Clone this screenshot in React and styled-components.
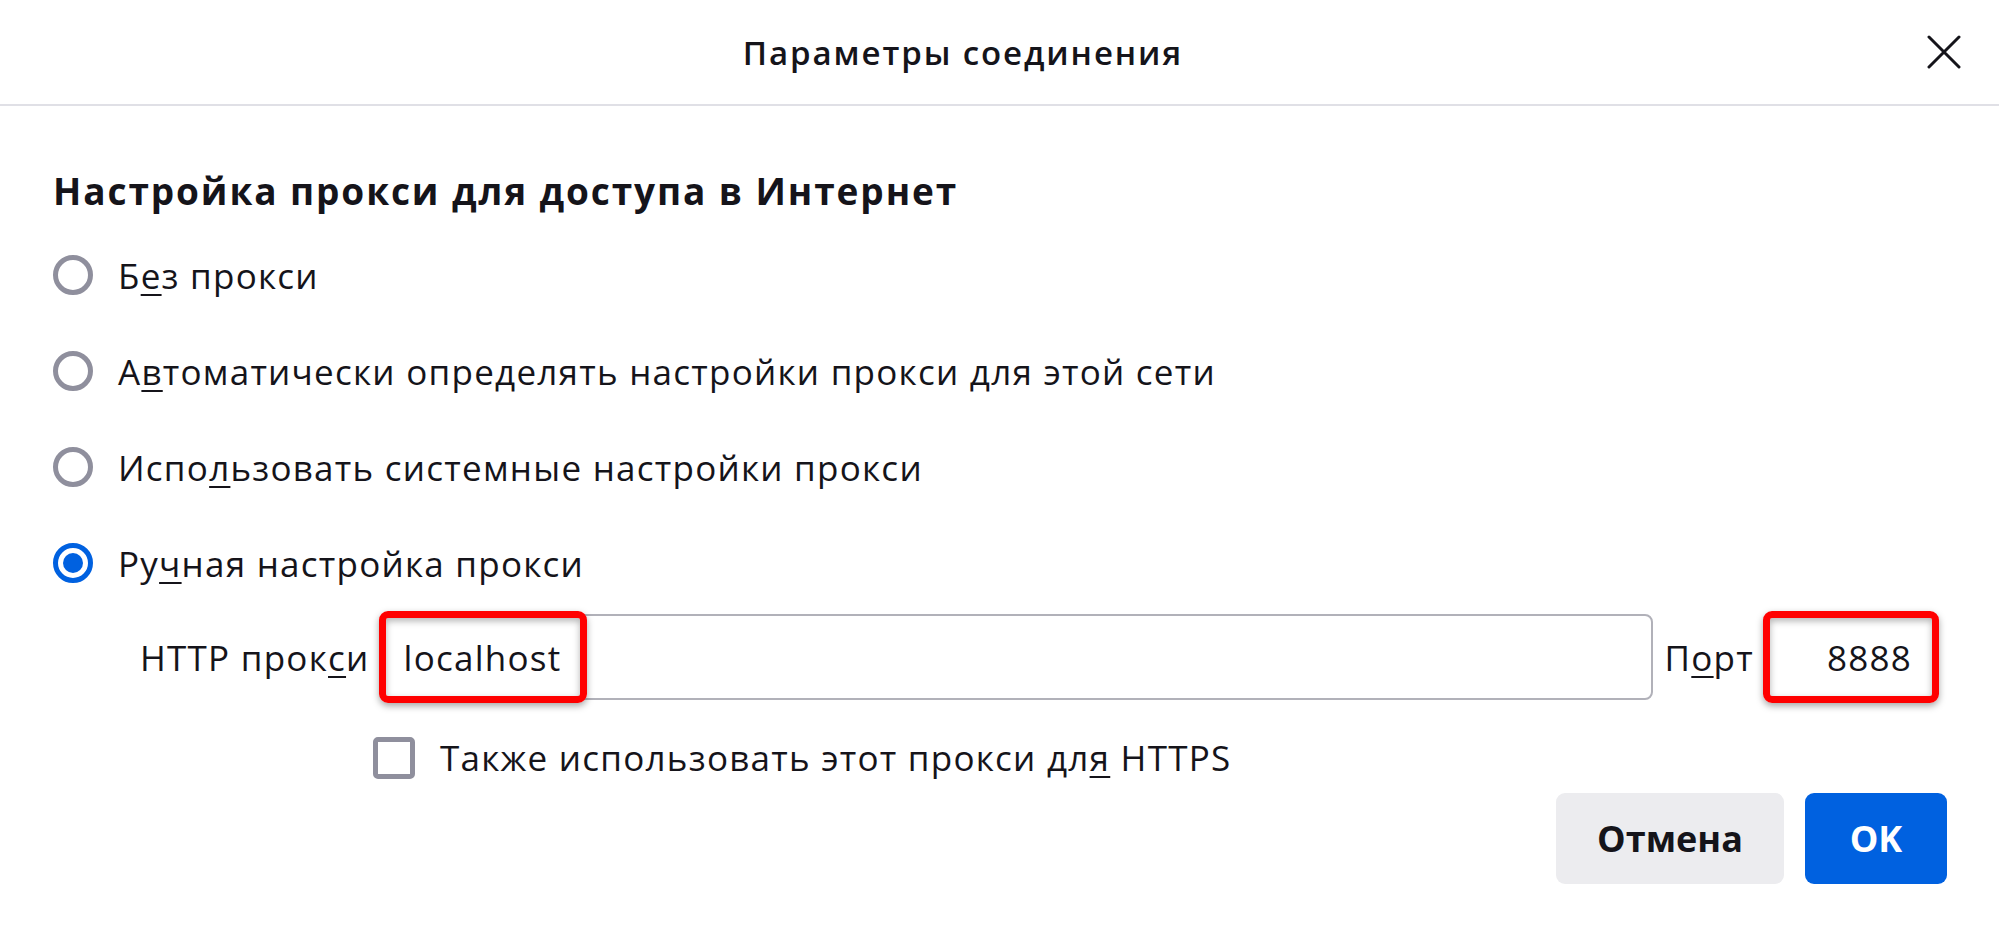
import React from 'react'
import styled, { createGlobalStyle } from 'styled-components'

const Global = createGlobalStyle`
  html, body {
    margin: 0;
    padding: 0;
    background: #fff;
  }
  body {
    font-family: "Open Sans", "Noto Sans", sans-serif;
    color: #15141a;
  }
`

const Dialog = styled.div`
  width: 1999px;
  height: 927px;
  display: flex;
  flex-direction: column;
  overflow: hidden;
`

const Header = styled.div`
  height: 104px;
  border-bottom: 2px solid #e0e0e6;
  display: flex;
  align-items: center;
`

const Title = styled.div`
  flex: 1;
  text-align: center;
  font-size: 33px;
  letter-spacing: 1.9px;
  font-weight: 600;
`

const CloseButton = styled.button`
  width: 36px;
  height: 36px;
  margin-right: 37px;
  padding: 0;
  border: none;
  background: none;
  display: flex;
  align-items: center;
  justify-content: center;
`

const Body = styled.div`
  padding: 0 52px 0 53px;
  display: flex;
  flex-direction: column;
`

const Heading = styled.h2`
  margin: 62px 0 0;
  font-size: 37px;
  letter-spacing: 1.9px;
  line-height: 46px;
  font-weight: 700;
`

const Options = styled.div`
  margin-top: 13px;
  display: flex;
  flex-direction: column;
`

const Text = styled.span`
  font-size: 35px;
  letter-spacing: 1.25px;
  white-space: nowrap;
`

const Option = styled.label`
  height: 96px;
  display: flex;
  align-items: center;
  gap: 25px;
`

const Radio = styled.span`
  width: 40px;
  height: 40px;
  box-sizing: border-box;
  border-radius: 50%;
  border: 5px solid ${props => (props.checked ? '#0061e0' : '#8f8f9d')};
  display: flex;
  align-items: center;
  justify-content: center;
  flex-shrink: 0;

  &::after {
    content: '';
    display: ${props => (props.checked ? 'block' : 'none')};
    width: 20px;
    height: 20px;
    border-radius: 50%;
    background: #0061e0;
  }
`

const Key = styled.span`
  text-decoration: underline;
  text-underline-offset: 5px;
  text-decoration-thickness: 2px;
`

const ProxyRow = styled.div`
  margin-top: 3px;
  height: 86px;
  padding: 0 11px 0 87px;
  display: flex;
  align-items: center;
  gap: 12px;
`

const Field = styled.div`
  position: relative;
  flex: ${props => (props.grow ? 1 : 'none')};
  width: ${props => (props.width ? `${props.width}px` : 'auto')};
  height: 86px;
  box-sizing: border-box;
  border: 2px solid #b1b1b9;
  border-radius: 8px;
  display: flex;
  align-items: center;
  justify-content: ${props => (props.right ? 'flex-end' : 'flex-start')};
  padding: 0 22px 0 20px;
`

const Highlight = styled.div`
  position: absolute;
  top: -5px;
  bottom: -5px;
  left: -5px;
  width: ${props => (props.width ? `${props.width}px` : 'auto')};
  right: ${props => (props.width ? 'auto' : '-5px')};
  box-sizing: border-box;
  border: 7px solid #ff0000;
  border-radius: 9px;
  box-shadow: 0 3px 7px rgba(0, 0, 0, 0.35), inset 0 3px 7px rgba(0, 0, 0, 0.3);
`

const CheckRow = styled.label`
  margin-top: 36px;
  height: 43px;
  padding-left: 320px;
  display: flex;
  align-items: center;
  gap: 25px;
`

const Checkbox = styled.span`
  width: 42px;
  height: 42px;
  box-sizing: border-box;
  border: 5px solid #8f8f9d;
  border-radius: 5px;
  flex-shrink: 0;
`

const Actions = styled.div`
  margin-top: 14px;
  display: flex;
  justify-content: flex-end;
  gap: 21px;
`

const Button = styled.button`
  height: 91px;
  width: ${props => props.width}px;
  border: none;
  border-radius: 9px;
  background: ${props => (props.primary ? '#0061e0' : '#ececef')};
  color: ${props => (props.primary ? '#fff' : '#15141a')};
  font-family: "Open Sans", "Noto Sans", sans-serif;
  font-size: 36px;
  font-weight: 700;
`

const options = [
  { before: 'Б', key: 'е', after: 'з прокси' },
  { before: 'А', key: 'в', after: 'томатически определять настройки прокси для этой сети' },
  { before: 'Испо', key: 'л', after: 'ьзовать системные настройки прокси' },
  { before: 'Ру', key: 'ч', after: 'ная настройка прокси', checked: true },
]

export default function App() {
  return (
    <Dialog>
      <Global />
      <Header>
        <Title>Параметры соединения</Title>
        <CloseButton aria-label="Закрыть">
          <svg width="34" height="34" viewBox="0 0 34 34">
            <path d="M2 2 L32 32 M32 2 L2 32" stroke="#15141a" strokeWidth="3" strokeLinecap="round" />
          </svg>
        </CloseButton>
      </Header>
      <Body>
        <Heading>Настройка прокси для доступа в Интернет</Heading>
        <Options>
          {options.map(o => (
            <Option key={o.before + o.key}>
              <Radio checked={o.checked} />
              <Text>
                {o.before}
                <Key>{o.key}</Key>
                {o.after}
              </Text>
            </Option>
          ))}
        </Options>
        <ProxyRow>
          <Text>
            HTTP прок<Key>с</Key>и
          </Text>
          <Field grow>
            <Text>localhost</Text>
            <Highlight width={208} />
          </Field>
          <Text>
            П<Key>о</Key>рт
          </Text>
          <Field width={170} right>
            <Text>8888</Text>
            <Highlight />
          </Field>
        </ProxyRow>
        <CheckRow>
          <Checkbox />
          <Text>
            Также использовать этот прокси дл<Key>я</Key> HTTPS
          </Text>
        </CheckRow>
        <Actions>
          <Button width={228}>Отмена</Button>
          <Button width={142} primary>
            OK
          </Button>
        </Actions>
      </Body>
    </Dialog>
  )
}
